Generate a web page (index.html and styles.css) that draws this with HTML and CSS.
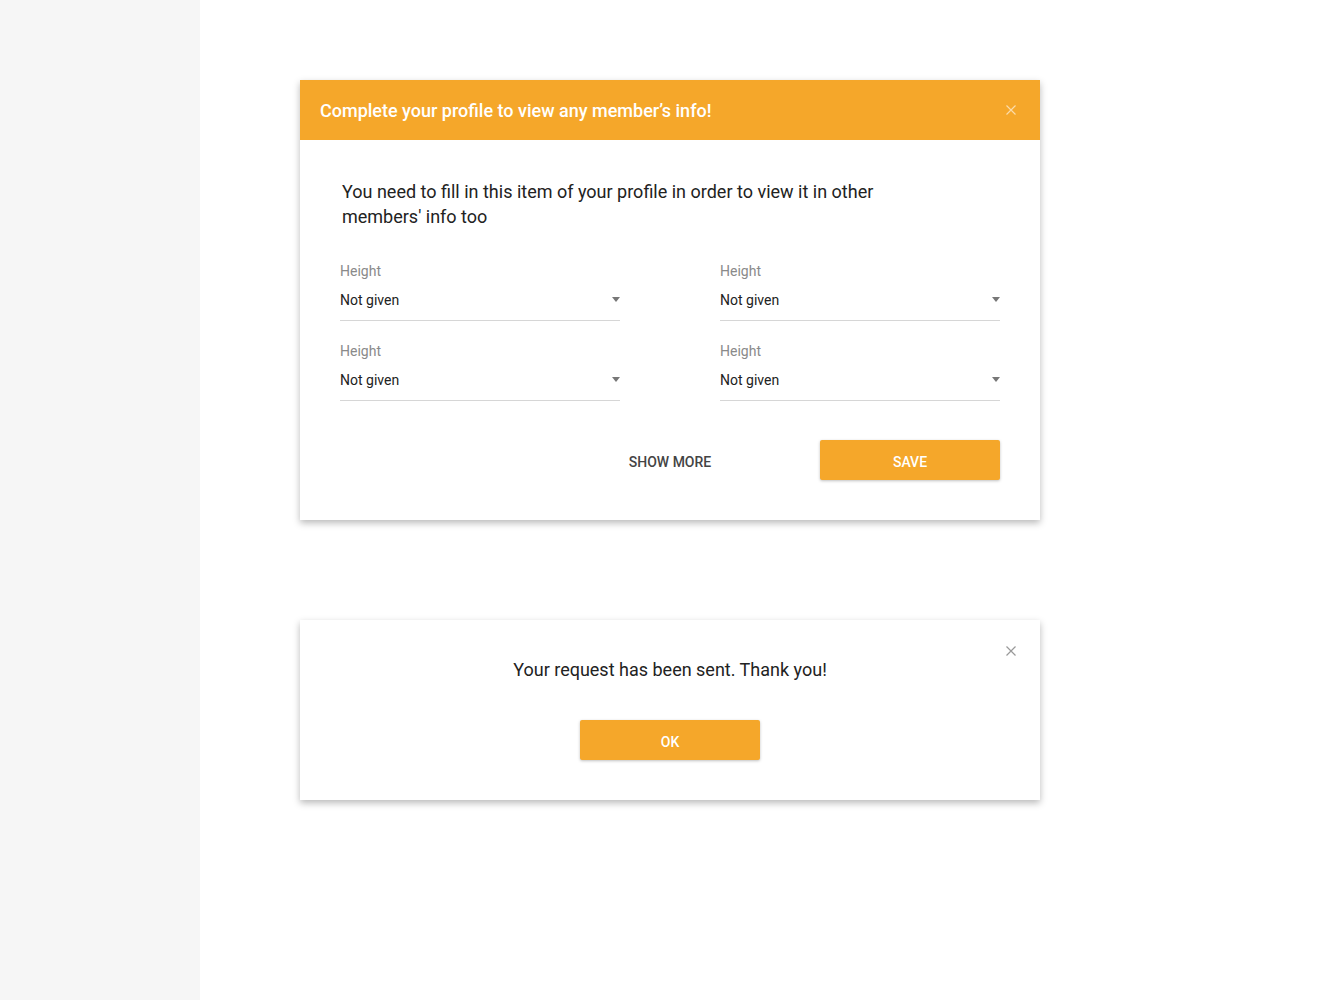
FILE: index.html
```html
<!DOCTYPE html>
<html>
<head>
<meta charset="utf-8">
<link rel="stylesheet" href="styles.css">
</head>
<body>
<div class="layout">
  <aside class="sidebar"></aside>
  <main class="content">
    <section class="dialog">
      <header class="dialog-header">
        <h2 class="dialog-title">Complete your profile to view any member’s info!</h2>
        <button class="close close-light" aria-label="Close">
          <svg width="10" height="10" viewBox="0 0 10 10"><path d="M0.5 0.5L9.5 9.5M9.5 0.5L0.5 9.5" stroke="currentColor" stroke-width="1.2" fill="none"/></svg>
        </button>
      </header>
      <div class="dialog-body">
        <p class="intro">You need to fill in this item of your profile in order to view it in other members' info too</p>
        <div class="fields">
          <div class="field">
            <div class="field-label">Height</div>
            <div class="field-select"><span>Not given</span><span class="caret"></span></div>
          </div>
          <div class="field">
            <div class="field-label">Height</div>
            <div class="field-select"><span>Not given</span><span class="caret"></span></div>
          </div>
          <div class="field">
            <div class="field-label">Height</div>
            <div class="field-select"><span>Not given</span><span class="caret"></span></div>
          </div>
          <div class="field">
            <div class="field-label">Height</div>
            <div class="field-select"><span>Not given</span><span class="caret"></span></div>
          </div>
        </div>
        <div class="actions">
          <button class="btn btn-flat">SHOW MORE</button>
          <button class="btn btn-primary">SAVE</button>
        </div>
      </div>
    </section>

    <section class="dialog dialog-small">
      <button class="close close-dark" aria-label="Close">
        <svg width="10" height="10" viewBox="0 0 10 10"><path d="M0.5 0.5L9.5 9.5M9.5 0.5L0.5 9.5" stroke="currentColor" stroke-width="1.2" fill="none"/></svg>
      </button>
      <p class="message">Your request has been sent. Thank you!</p>
      <div class="actions actions-center">
        <button class="btn btn-primary">OK</button>
      </div>
    </section>
  </main>
</div>
</body>
</html>
```

FILE: styles.css
```css
* { box-sizing: border-box; }
html, body { margin: 0; padding: 0; }
body {
  font-family: Roboto, "Noto Sans", Arial, sans-serif;
  background: #fff;
  color: #222;
}
.layout {
  display: flex;
  min-height: 1000px;
}
.sidebar {
  width: 200px;
  flex: 0 0 200px;
  background: #f6f6f6;
}
.content {
  flex: 1;
  padding: 80px 0 0 100px;
  display: flex;
  flex-direction: column;
  gap: 100px;
  align-items: flex-start;
}
.dialog {
  position: relative;
  width: 740px;
  background: #fff;
  box-shadow: 0 3px 7px rgba(0,0,0,0.28);
}
.dialog-header {
  height: 60px;
  background: #f5a72a;
  display: flex;
  align-items: center;
  justify-content: space-between;
  padding: 0 22px 0 20px;
}
.dialog-title {
  margin: 0;
  font-size: 18px;
  font-weight: 500;
  color: #fff;
  letter-spacing: 0;
}
.close {
  border: 0;
  background: none;
  padding: 0;
  width: 14px;
  height: 14px;
  display: flex;
  align-items: center;
  justify-content: center;
  cursor: pointer;
}
.close-light { color: rgba(255,255,255,0.6); }
.close-dark {
  position: absolute;
  top: 24px;
  right: 22px;
  color: #999;
}
.dialog-body {
  padding: 39px 40px 40px 40px;
}
.intro {
  margin: 0 0 32px 2px;
  max-width: 560px;
  font-size: 18px;
  line-height: 25px;
  color: #222;
}
.fields {
  display: grid;
  grid-template-columns: 280px 280px;
  column-gap: 100px;
  row-gap: 20px;
}
.field-label {
  font-size: 14px;
  line-height: 20px;
  color: #8a8a8a;
}
.field-select {
  height: 40px;
  display: flex;
  align-items: center;
  justify-content: space-between;
  border-bottom: 1px solid #d6d6d6;
  font-size: 14px;
  color: #222;
  padding: 0 0 2px 0;
}
.caret {
  width: 0;
  height: 0;
  border-left: 4.5px solid transparent;
  border-right: 4.5px solid transparent;
  border-top: 5px solid #777;
}
.actions {
  display: flex;
  justify-content: flex-end;
  gap: 60px;
  margin-top: 39px;
}
.actions-center {
  justify-content: center;
  margin-top: 38px;
}
.btn {
  width: 180px;
  height: 40px;
  border: 0;
  border-radius: 2px;
  padding: 3px 0 0;
  font-family: Roboto, "Noto Sans", Arial, sans-serif;
  font-size: 14px;
  font-weight: 500;
  cursor: pointer;
}
.btn-flat {
  background: transparent;
  color: #444;
}
.btn-primary {
  background: #f5a72a;
  color: #fff;
  box-shadow: 0 1px 3px rgba(0,0,0,0.25);
}
.dialog-small {
  padding: 37px 40px 40px;
}
.message {
  margin: 0;
  text-align: center;
  font-size: 18px;
  line-height: 25px;
  color: #222;
}
```
